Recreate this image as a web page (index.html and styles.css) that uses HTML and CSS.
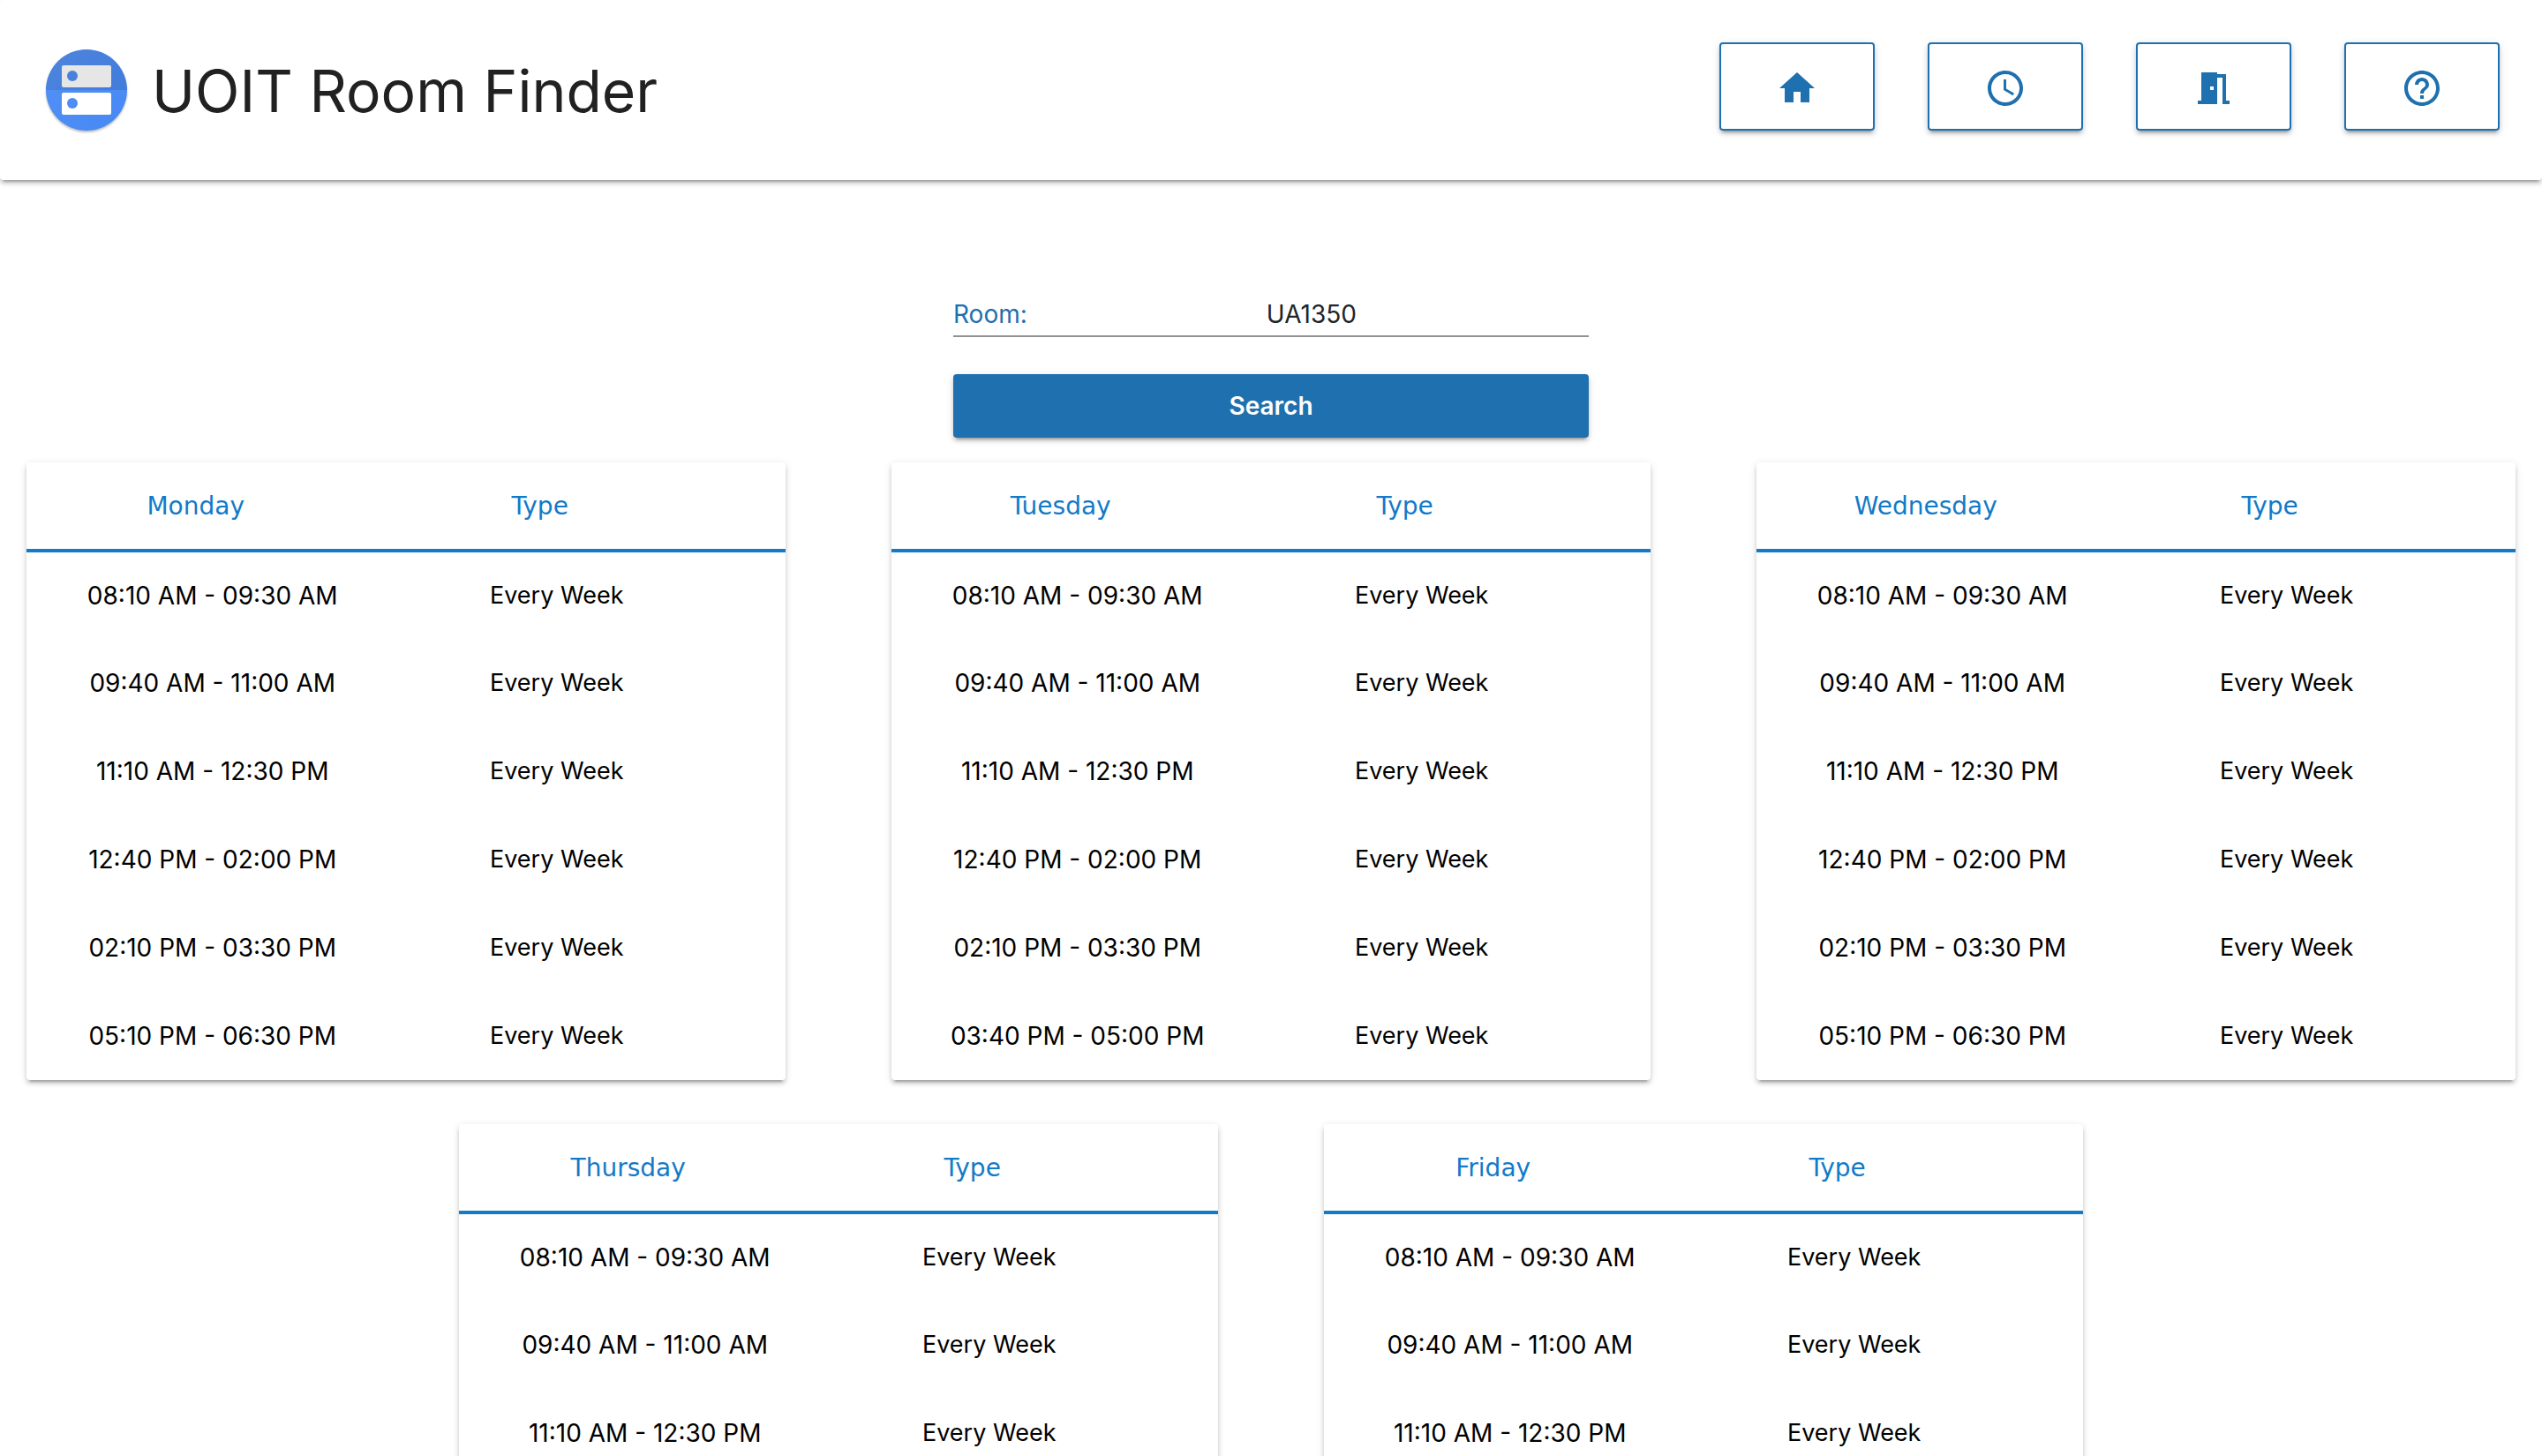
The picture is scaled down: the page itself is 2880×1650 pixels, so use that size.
FILE: index.html
```html
<!DOCTYPE html>
<html lang="en">
<head>
<meta charset="utf-8">
<title>UOIT Room Finder</title>
<meta name="viewport" content="width=device-width, initial-scale=1">
<link rel="stylesheet" href="styles.css">
</head>
<body>
<header class="header raised">
  <div class="brand">
    <svg class="logo" viewBox="0 0 96 96" aria-hidden="true">
      <defs>
        <linearGradient id="shine" x1="0" y1="0" x2="1" y2="1">
          <stop offset="0" stop-color="#fff" stop-opacity=".08"/>
          <stop offset="1" stop-color="#fff" stop-opacity="0"/>
        </linearGradient>
      </defs>
      <circle cx="48" cy="48" r="46" fill="#4688f4"/>
      <rect x="20" y="51" width="56" height="25" rx="2" fill="#fff"/>
      <rect x="20" y="20" width="56" height="25" rx="2" fill="#fff"/>
      <circle cx="32" cy="63" r="6" fill="#4688f4"/>
      <circle cx="32" cy="32" r="6" fill="#4688f4"/>
      <path d="M2 48a46 46 0 0 1 92 0z" fill="#000" fill-opacity=".1"/>
      <circle cx="48" cy="48" r="46" fill="url(#shine)"/>
    </svg>
    <h1 class="title">UOIT Room Finder</h1>
  </div>
  <nav class="nav">
    <button class="nav-button raised" type="button" aria-label="Home">
      <svg class="icon" viewBox="0 0 24 24"><path d="M10 20v-6h4v6h5v-8h3L12 3 2 12h3v8z"/></svg>
    </button>
    <button class="nav-button raised" type="button" aria-label="Search by time">
      <svg class="icon" viewBox="0 0 24 24"><path d="M11.99 2C6.47 2 2 6.48 2 12s4.47 10 9.99 10C17.52 22 22 17.52 22 12S17.52 2 11.99 2zM12 20c-4.42 0-8-3.58-8-8s3.58-8 8-8 8 3.58 8 8-3.58 8-8 8zm.5-13H11v6l5.25 3.15.75-1.23-4.5-2.67z"/></svg>
    </button>
    <button class="nav-button raised" type="button" aria-label="Search by room">
      <svg class="icon" viewBox="0 0 24 24"><path d="M14 6v15H3v-2h2V3h9v1h5v15h2v2h-4V6h-3zm-4 5v2h2v-2h-2z"/></svg>
    </button>
    <button class="nav-button raised" type="button" aria-label="Help">
      <svg class="icon" viewBox="0 0 24 24"><path d="M11 18h2v-2h-2v2zm1-16C6.48 2 2 6.48 2 12s4.48 10 10 10 10-4.48 10-10S17.52 2 12 2zm0 18c-4.41 0-8-3.59-8-8s3.59-8 8-8 8 3.59 8 8-3.59 8-8 8zm0-14c-2.21 0-4 1.79-4 4h2c0-1.1.9-2 2-2s2 .9 2 2c0 2-3 1.75-3 5h2c0-2.25 3-2.5 3-5 0-2.21-1.79-4-4-4z"/></svg>
    </button>
  </nav>
</header>
<main>
  <form class="search">
    <div class="field">
      <label class="field-label" for="room">Room:</label>
      <input class="field-input" id="room" type="text" value="UA1350">
    </div>
    <button class="search-button raised" type="button">Search</button>
  </form>
  <section class="days">
    <table class="day raised">
      <thead><tr><th scope="col">Monday</th><th scope="col">Type</th></tr></thead>
      <tbody>
        <tr><td>08:10 AM - 09:30 AM</td><td>Every Week</td></tr>
        <tr><td>09:40 AM - 11:00 AM</td><td>Every Week</td></tr>
        <tr><td>11:10 AM - 12:30 PM</td><td>Every Week</td></tr>
        <tr><td>12:40 PM - 02:00 PM</td><td>Every Week</td></tr>
        <tr><td>02:10 PM - 03:30 PM</td><td>Every Week</td></tr>
        <tr><td>05:10 PM - 06:30 PM</td><td>Every Week</td></tr>
      </tbody>
    </table>
    <table class="day raised">
      <thead><tr><th scope="col">Tuesday</th><th scope="col">Type</th></tr></thead>
      <tbody>
        <tr><td>08:10 AM - 09:30 AM</td><td>Every Week</td></tr>
        <tr><td>09:40 AM - 11:00 AM</td><td>Every Week</td></tr>
        <tr><td>11:10 AM - 12:30 PM</td><td>Every Week</td></tr>
        <tr><td>12:40 PM - 02:00 PM</td><td>Every Week</td></tr>
        <tr><td>02:10 PM - 03:30 PM</td><td>Every Week</td></tr>
        <tr><td>03:40 PM - 05:00 PM</td><td>Every Week</td></tr>
      </tbody>
    </table>
    <table class="day raised">
      <thead><tr><th scope="col">Wednesday</th><th scope="col">Type</th></tr></thead>
      <tbody>
        <tr><td>08:10 AM - 09:30 AM</td><td>Every Week</td></tr>
        <tr><td>09:40 AM - 11:00 AM</td><td>Every Week</td></tr>
        <tr><td>11:10 AM - 12:30 PM</td><td>Every Week</td></tr>
        <tr><td>12:40 PM - 02:00 PM</td><td>Every Week</td></tr>
        <tr><td>02:10 PM - 03:30 PM</td><td>Every Week</td></tr>
        <tr><td>05:10 PM - 06:30 PM</td><td>Every Week</td></tr>
      </tbody>
    </table>
    <table class="day raised">
      <thead><tr><th scope="col">Thursday</th><th scope="col">Type</th></tr></thead>
      <tbody>
        <tr><td>08:10 AM - 09:30 AM</td><td>Every Week</td></tr>
        <tr><td>09:40 AM - 11:00 AM</td><td>Every Week</td></tr>
        <tr><td>11:10 AM - 12:30 PM</td><td>Every Week</td></tr>
      </tbody>
    </table>
    <table class="day raised">
      <thead><tr><th scope="col">Friday</th><th scope="col">Type</th></tr></thead>
      <tbody>
        <tr><td>08:10 AM - 09:30 AM</td><td>Every Week</td></tr>
        <tr><td>09:40 AM - 11:00 AM</td><td>Every Week</td></tr>
        <tr><td>11:10 AM - 12:30 PM</td><td>Every Week</td></tr>
      </tbody>
    </table>
  </section>
</main>
</body>
</html>
```
FILE: styles.css
```css
* { box-sizing: border-box; }

body {
  margin: 0;
  background: #fff;
  color: #000;
  font-family: Inter, "Liberation Sans", sans-serif;
  font-size: 28px;
  line-height: 36px;
}

button, input { font: inherit; }

.raised {
  box-shadow:
    0 6px 2px -4px rgba(0, 0, 0, .2),
    0 4px 4px 0 rgba(0, 0, 0, .14),
    0 2px 10px 0 rgba(0, 0, 0, .12);
}

.header {
  display: flex;
  justify-content: space-between;
  align-items: flex-start;
  padding: 48px 48px 48px 50px;
  min-height: 204px;
  border-radius: 4px;
}

.brand {
  display: flex;
  align-items: flex-start;
  gap: 26px;
  padding-top: 6px;
}

.logo {
  width: 96px;
  height: 96px;
  filter: drop-shadow(0 2px 1px rgba(0, 0, 0, .25));
}

.title {
  margin: 0;
  color: #212121;
  font-size: 66px;
  font-weight: 400;
  line-height: 98px;
}

.nav { display: flex; gap: 60px; }

.nav-button {
  display: flex;
  align-items: center;
  justify-content: center;
  width: 176px;
  height: 100px;
  padding: 4px 0 0;
  border: 2px solid #1f70ae;
  border-radius: 4px;
  background: #fff;
}

.icon {
  width: 48px;
  height: 48px;
  fill: #1f70ae;
}

.search {
  width: 25%;
  margin: 126px auto 0;
}

.field {
  display: flex;
  align-items: center;
  height: 52px;
  padding-top: 2px;
  border-bottom: 2px solid #919191;
}

.field-label { color: #1f70ae; }

.field-input {
  flex: 1;
  min-width: 0;
  margin-left: 8px;
  padding: 0;
  border: 0;
  outline: 0;
  background: transparent;
  color: #212529;
  text-align: center;
}

.search-button {
  display: block;
  width: 100%;
  height: 72px;
  margin-top: 42px;
  border: 0;
  border-radius: 4px;
  background: #1f70ae;
  color: #fff;
  font-weight: 600;
}

.days {
  display: flex;
  flex-wrap: wrap;
  justify-content: center;
  align-items: flex-start;
  gap: 50px 120px;
  padding: 28px 30px 50px;
}

.day {
  width: calc((100% - 240px) / 3);
  table-layout: fixed;
  border-collapse: separate;
  border-spacing: 0;
  border-radius: 4px;
  text-align: center;
}

.day th {
  height: 102px;
  padding: 2px 38px 0 0;
  border-bottom: 4px solid #127ac8;
  color: #127ac8;
  font-family: "DejaVu Sans", sans-serif;
  font-weight: 400;
}

.day th:first-child { width: 49%; }

.day th:last-child { padding-right: 118px; }

.day td {
  height: 100px;
  padding: 0;
}

.day tbody tr:first-child td { height: 98px; }

.day td:last-child {
  padding-right: 80px;
  font-size: 27px;
}
```
